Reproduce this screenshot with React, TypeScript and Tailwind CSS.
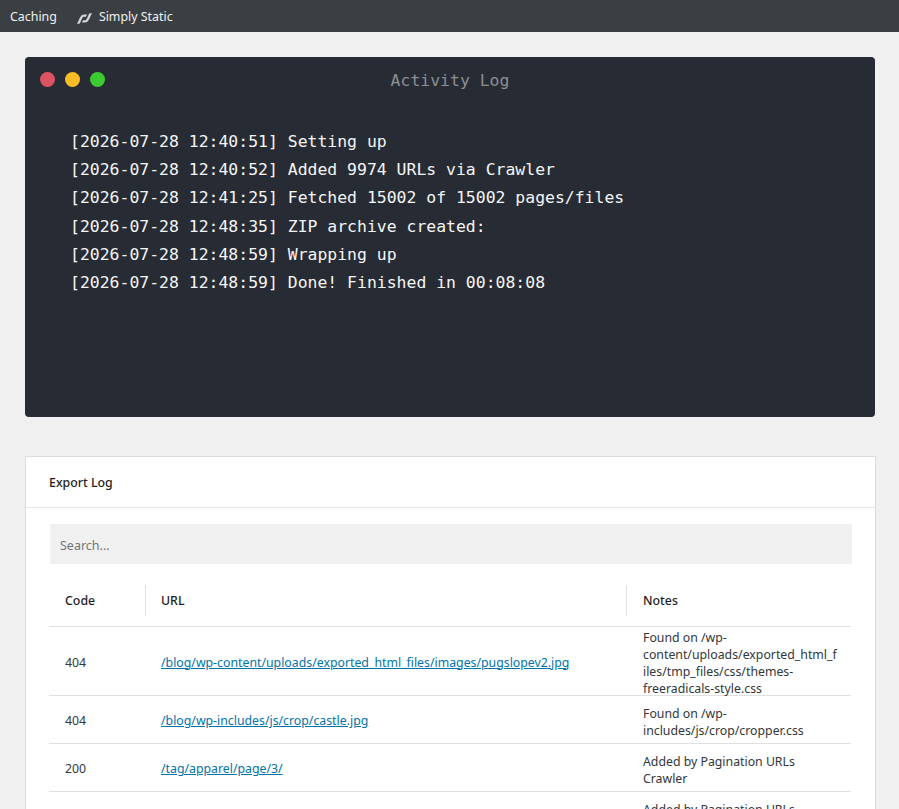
const logLines = [
  ['[2026-07-28 12:40:51]', 'Setting up'],
  ['[2026-07-28 12:40:52]', 'Added 9974 URLs via Crawler'],
  ['[2026-07-28 12:41:25]', 'Fetched 15002 of 15002 pages/files'],
  ['[2026-07-28 12:48:35]', 'ZIP archive created:'],
  ['[2026-07-28 12:48:59]', 'Wrapping up'],
  ['[2026-07-28 12:48:59]', 'Done! Finished in 00:08:08'],
];

const rows = [
  {
    code: '404',
    url: '/blog/wp-content/uploads/exported_html_files/images/pugslopev2.jpg',
    notes: 'Found on /wp-content/uploads/exported_html_files/tmp_files/css/themes-freeradicals-style.css',
  },
  {
    code: '404',
    url: '/blog/wp-includes/js/crop/castle.jpg',
    notes: 'Found on /wp-includes/js/crop/cropper.css',
  },
  {
    code: '200',
    url: '/tag/apparel/page/3/',
    notes: 'Added by Pagination URLs Crawler',
  },
  {
    code: '200',
    url: '/tag/apparel/page/4/',
    notes: 'Added by Pagination URLs Crawler',
  },
];

function SimplyStaticIcon() {
  return (
    <svg width="15" height="11" viewBox="0 0 15 11" fill="#d4d5d6" className="mt-[3px]">
      <path d="M0 11 L3 4.5 Q4.3 1.5 7 1.5 L10 1.5 L9 3.7 L7 3.7 Q5.9 3.7 5.3 5 L2.8 10.6 Z" />
      <path d="M15 0 L12 6.5 Q10.7 9.5 8 9.5 L5 9.5 L6 7.3 L8 7.3 Q9.1 7.3 9.7 6 L12.2 0.4 Z" />
    </svg>
  );
}

export default function App() {
  return (
    <div className="h-[809px] overflow-hidden bg-[#f0f0f0] font-['Noto_Sans',sans-serif] text-[12.35px] text-[#32373c]">
      <div className="flex h-8 items-center bg-[#3a3f43] pt-[2px] pl-[10px] text-[12.4px] text-[#f0f0f1]">
        <span>Caching</span>
        <span className="ml-5 flex items-center gap-[7px]">
          <SimplyStaticIcon />
          Simply Static
        </span>
      </div>

      <div className="pt-[25px] pl-[25px]">
        <section className="h-[360px] w-[850px] rounded-[4px] bg-[#272b33] font-['DejaVu_Sans_Mono',monospace]">
          <div className="relative flex h-[46px] items-center justify-center pt-[2px] text-[16.44px] text-[#8b8f94]">
            <div className="absolute top-[15px] left-[15px] flex gap-[10px]">
              <span className="h-[15px] w-[15px] rounded-full bg-[#dd5364]" />
              <span className="h-[15px] w-[15px] rounded-full bg-[#f8bd25]" />
              <span className="h-[15px] w-[15px] rounded-full bg-[#3ccb30]" />
            </div>
            Activity Log
          </div>
          <div className="pt-[25px] pl-[45px] text-[16.44px] leading-[28.2px] text-[#f5f6f7]">
            {logLines.map(([time, message], i) => (
              <div key={i} className="whitespace-pre">
                {time} {message}
              </div>
            ))}
          </div>
        </section>

        <section className="mt-[39px] w-[851px] border border-[#dcdcde] bg-white">
          <div className="flex h-[51px] items-center border-b border-[#e8e8e8] pt-[2px] pl-[23px] font-medium text-[#1e1e1e]">
            Export Log
          </div>
          <div className="pt-[16px] pl-[23px]">
            <input
              placeholder="Search..."
              className="ml-px block h-10 w-[802px] rounded-[2px] bg-[#f0f0f0] px-[10px] pt-[2px] text-[12.5px] outline-none placeholder:text-[#757575]"
            />
            <table className="mt-[21px] w-[802px] table-fixed border-collapse text-left">
              <thead>
                <tr className="border-b border-[#e0e0e0] text-[#1e1e1e]">
                  <th className="w-[96px] pb-[10px] font-medium">
                    <div className="flex h-[31px] items-center pt-[2px] pl-[16px]">Code</div>
                  </th>
                  <th className="w-[481px] pb-[10px] font-medium">
                    <div className="flex h-[31px] items-center border-l border-[#e0e0e0] pt-[2px] pl-[15px]">URL</div>
                  </th>
                  <th className="pb-[10px] font-medium">
                    <div className="flex h-[31px] items-center border-l border-[#e0e0e0] pt-[2px] pl-[16px]">Notes</div>
                  </th>
                </tr>
              </thead>
              <tbody className="text-[12.3px]">
                {rows.map((row, i) => (
                  <tr key={i} className="border-b border-[#e0e0e0]">
                    <td className="h-[48px] pl-[16px]">
                      <div className="translate-y-[2px]">{row.code}</div>
                    </td>
                    <td className="h-[48px] pl-[16px]">
                      <div className="translate-y-[2px]">
                        <a href="#" className="text-[#0073aa] underline">
                          {row.url}
                        </a>
                      </div>
                    </td>
                    <td className="h-[48px] pr-[14px] pl-[17px] leading-[17px] wrap-anywhere">
                      <div className="translate-y-[2px]">{row.notes}</div>
                    </td>
                  </tr>
                ))}
              </tbody>
            </table>
          </div>
        </section>
      </div>
    </div>
  );
}
